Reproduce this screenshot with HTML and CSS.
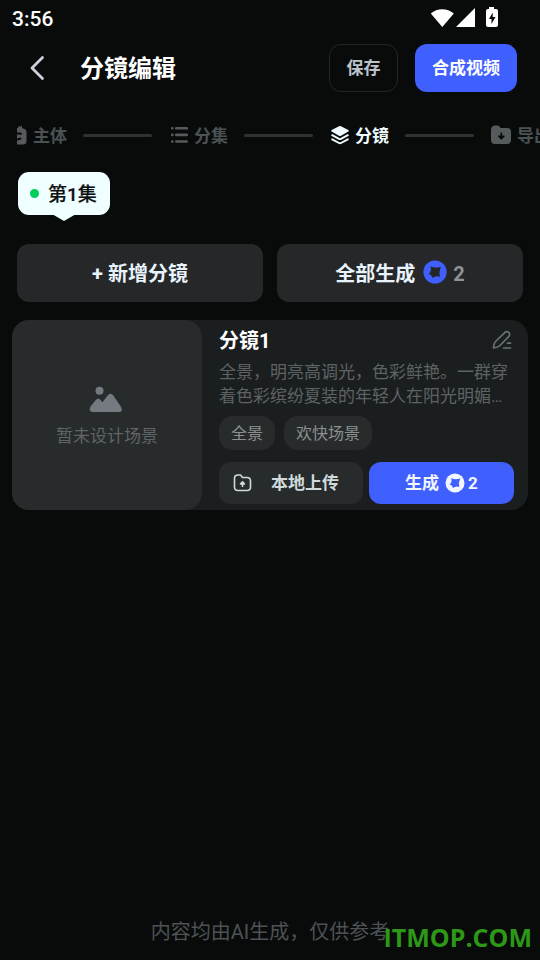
FILE: index.html
```html
<!DOCTYPE html>
<html lang="zh-CN">
<head>
<meta charset="utf-8">
<title>分镜编辑</title>
<link rel="stylesheet" href="styles.css">
</head>
<body>
<div class="statusbar">
  <span class="clock">3:56</span>
  <svg class="status-icons" width="70" height="22" viewBox="0 0 70 22" fill="#fff">
    <path d="M.8 6.500C7 .8 17.500.8 23.800 6.500L12.300 20Z"/>
    <path d="M26 20L45 1V20Z"/>
    <path d="M59 0h5v2h2q2 0 2 2v14q0 2-2 2h-8q-2 0-2-2V4q0-2 2-2h1z"/>
    <path d="M62.700 5.500L59 12h2.500v5l4-7h-2.800z" fill="#090b0a"/>
  </svg>
</div>
<header class="header">
  <svg class="back" width="18" height="28" viewBox="0 0 18 28" fill="none" stroke="#d0d0dc" stroke-width="2.800" stroke-linecap="round" stroke-linejoin="round"><path d="M14.500 3.500L4 14L14.500 24.500"/></svg>
  <h1 class="title">分镜编辑</h1>
  <button class="save"><span>保存</span></button>
  <button class="compose"><span>合成视频</span></button>
</header>
<nav class="steps">
  <div class="track">
    <div class="step">
      <svg width="18" height="20" viewBox="0 0 18 20"><path fill="#555a5d" d="M3 3h6l1-2.500L11 2l2-1.500V3q4.500 1 4.500 4v9q0 3.500-3.500 3.500H4q-3 0-3-3.500V6q0-3 2-3z"/><path d="M6 8.500h4.500q1.500 0 2 1M6 14q4 1 6-1" fill="none" stroke="#090b0a" stroke-width="1.800"/></svg>
      <span>主体</span>
    </div>
    <i class="line"></i>
    <div class="step">
      <svg width="18" height="18" viewBox="0 0 18 18" fill="#555a5d"><rect x="1" y="1" width="2.600" height="2.600" rx="1"/><rect x="1" y="7.600" width="2.600" height="2.600" rx="1"/><rect x="1" y="14.200" width="2.600" height="2.600" rx="1"/><rect x="5" y="1" width="13" height="2.600" rx="1.200"/><rect x="5" y="7.600" width="13" height="2.600" rx="1.200"/><rect x="5" y="14.200" width="13" height="2.600" rx="1.200"/></svg>
      <span>分集</span>
    </div>
    <i class="line"></i>
    <div class="step active">
      <svg width="18" height="20" viewBox="0 0 18 20"><path fill="#eefcff" d="M8 1.300q1-.5 2 0l7.300 3.700q1.200.8 0 1.600l-7.300 4.200q-1 .5-2 0L.7 6.600q-1.200-.8 0-1.600z"/><path fill="none" stroke="#eefcff" stroke-width="1.900" stroke-linejoin="round" stroke-linecap="round" d="M1.200 10.200l6.800 3.700q1 .5 2 0l6.800-3.700M1.200 14.300l6.800 3.700q1 .5 2 0l6.800-3.700"/></svg>
      <span>分镜</span>
    </div>
    <i class="line"></i>
    <div class="step export">
      <svg width="20" height="20" viewBox="0 0 20 20"><path fill="#555a5d" d="M0 5q0-4.500 4.500-4.500h2q1.300 0 2 1L9.500 3H16q4 0 4 4v8q0 4-4 4H4q-4 0-4-4z"/><path d="M10.300 7.500v6M7.800 11.200l2.500 2.600 2.500-2.600z" fill="#090b0a" stroke="#090b0a" stroke-width="1.600" stroke-linejoin="round"/></svg>
      <span>导出</span>
    </div>
  </div>
</nav>
<div class="episode"><i class="dot"></i><span>第1集</span></div>
<div class="actions">
  <button class="action"><span>+ 新增分镜</span></button>
  <button class="action"><span>全部生成</span><svg class="coin" width="24" height="24" viewBox="0 0 24 24"><circle cx="12" cy="12" r="11.600" fill="#405fff"/><path fill="#252628" d="M7.600 6.200Q11.800 8.700 18 6.700Q15.700 11.500 17 16.700Q12.800 15.200 9.400 18Q9.200 15 5.700 13.900Q8.800 11.200 7.600 6.200Z"/></svg><span class="cost">2</span></button>
</div>
<article class="card">
  <div class="scene">
    <svg width="34" height="27" viewBox="0 0 34 27" fill="#757a80"><circle cx="10.500" cy="4.800" r="4"/><path d="M1.500 20.500l5.300-6.500q2.400-3 4.800 0l1.800 2.200 5.200-6.800q3-3.300 5.700 0l7.800 11.500q2.200 5.100-2.100 5.100H4q-5 0-2.500-5.500z"/></svg>
    <span>暂未设计场景</span>
  </div>
  <div class="detail">
    <div class="card-head">
      <h2>分镜1</h2>
      <svg width="20" height="20" viewBox="0 0 20 20" fill="none" stroke="#6b7073" stroke-width="1.700" stroke-linecap="round" stroke-linejoin="round"><path d="M1.500 18q0-4.500 2-6.500L13 2.300q2-1.500 3.700 0t.2 4L8 15.500q-2 2-6.500 2.500zM11.500 18h7M15.500 13.200h3"/></svg>
    </div>
    <p class="desc">全景，明亮高调光，色彩鲜艳。一群穿<br>着色彩缤纷夏装的年轻人在阳光明媚…</p>
    <div class="tags"><span>全景</span><span>欢快场景</span></div>
    <div class="card-actions">
      <button class="upload"><svg width="20" height="18" viewBox="0 0 20 18" fill="none" stroke="#d0dadd" stroke-width="1.600" stroke-linejoin="round"><path d="M1.500 4.500q0-3.500 3.500-3.500h2.500l2 2.500H14q3.500 0 3.500 3.500v6q0 3.500-3.500 3.500H5q-3.500 0-3.500-3.500z"/><path fill="#d0dadd" d="M9.500 13V8M7.500 10l2-2.200 2 2.200z"/></svg><span>本地上传</span></button>
      <button class="generate"><span>生成</span><svg width="20" height="20" viewBox="0 0 20 20"><circle cx="10" cy="10" r="9.500" fill="#f1f5ff"/><path fill="#405fff" d="M6.300 5Q10 7.200 15.200 5.400Q13.200 9.500 14.300 13.900Q10.800 12.700 7.900 15Q7.700 12.500 4.700 11.600Q7.300 9.200 6.300 5Z"/></svg><span class="count">2</span></button>
    </div>
  </div>
</article>
<footer class="footer">内容均由AI生成，仅供参考</footer>
<div class="watermark">ITMOP.COM</div>
</body>
</html>
```
FILE: styles.css
```css
* { box-sizing: border-box; }
body {
  margin: 0;
  width: 540px;
  height: 960px;
  display: flex;
  flex-direction: column;
  position: relative;
  overflow: hidden;
  background: #090b0a;
  color: #fff;
  font-family: Roboto, "Noto Sans CJK SC", sans-serif;
}
button {
  border: 0;
  padding: 0 0 3px;
  font: inherit;
  color: inherit;
  display: flex;
  align-items: center;
  justify-content: center;
}
h1, h2, p { margin: 0; }
svg { display: block; flex: none; }
.statusbar {
  height: 36px;
  padding: 0 40px 0 12px;
  display: flex;
  align-items: center;
  justify-content: space-between;
}
.clock { font-size: 21px; font-weight: 500; line-height: 38px; padding-top: 2px; }
.header {
  height: 64px;
  padding: 0 23px 0 28px;
  display: flex;
  align-items: center;
}
.title { margin-left: 34px; padding-top: 2px; font-size: 24px; line-height: 36px; font-weight: 700; }
.save, .compose { height: 48px; border-radius: 12px; font-size: 17px; font-weight: 700; }
.save { width: 69px; margin-left: auto; background: transparent; border: 1px solid #242627; color: #b9c3c9; }
.compose { width: 102px; margin-left: 17px; background: #405fff; }
.steps { height: 36px; margin: 17px 0 0 17px; overflow: hidden; }
.track { display: flex; align-items: center; height: 36px; width: max-content; margin-left: -8px; }
.step { display: flex; align-items: center; gap: 6px; color: #4c5254; font-size: 17px; font-weight: 700; line-height: 24px; }
.step span { padding-top: 2px; }
.step.active { color: #eefcff; }
.step.export { margin-left: -1px; }
.line { width: 69px; height: 3px; margin: 0 18px 0 16px; border-radius: 2px; background: #303232; }
.episode {
  position: relative;
  width: 92px;
  height: 43px;
  margin: 19px 0 0 18px;
  padding-left: 12px;
  display: flex;
  align-items: center;
  gap: 9px;
  border-radius: 11px;
  background: #efffff;
  color: #0d1112;
  font-size: 19px;
  font-weight: 500;
}
.episode span { padding-bottom: 2px; -webkit-text-stroke: .2px #0d1112; }
.episode::after {
  content: "";
  position: absolute;
  left: 34px;
  top: 42px;
  width: 24px;
  height: 7px;
  background: #efffff;
  clip-path: polygon(0 0, 100% 0, 50% 100%);
}
.dot { width: 9px; height: 9px; border-radius: 50%; background: #00ce58; }
.actions { display: flex; gap: 14px; margin: 29px 17px 0; }
.action { flex: 1; height: 58px; border-radius: 12px; background: #262729; color: #e8f3fb; font-size: 20px; font-weight: 700; }
.action { padding-bottom: 1px; }
.coin { margin: -1px 6px 0 8px; }
.cost { padding-top: 2px; color: #8e9499; }
.card { display: flex; height: 190px; margin: 18px 12px 0; border-radius: 17px; background: #1b1e1f; }
.scene {
  width: 190px;
  border-radius: 17px;
  background: #272b2c;
  display: flex;
  flex-direction: column;
  align-items: center;
  padding-top: 66px;
  color: #5f6466;
  font-size: 17px;
  line-height: 24px;
}
.scene span { margin-top: 11px; }
.scene svg { margin-right: 2px; }
.detail { width: 295px; margin-left: 17px; }
.card-head { display: flex; justify-content: space-between; align-items: center; height: 40px; padding-right: 2px; }
.card-head h2 { padding-top: 2px; font-size: 20px; line-height: 30px; font-weight: 700; }
.desc { color: #5d6364; font-size: 17px; line-height: 24px; white-space: nowrap; }
.tags { display: flex; gap: 9px; margin-top: 8px; }
.tags span { height: 34px; padding: 0 12px; border-radius: 14px; background: #282b2c; color: #8c9092; font-size: 16px; line-height: 36px; }
.card-actions { display: flex; gap: 6px; margin-top: 12px; }
.card-actions button { height: 42px; padding-bottom: 0; border-radius: 12px; font-size: 17px; font-weight: 700; }
.card-actions .upload { width: 144px; justify-content: flex-start; padding-left: 14px; gap: 18px; background: #272b2c; color: #d0dadd; }
.upload span, .generate span:first-child { padding-bottom: 3px; }
.card-actions .generate { width: 145px; gap: 3px; background: #405fff; color: #f1f5ff; }
.generate svg { margin-left: 3px; }
.footer { margin-top: auto; height: 57px; line-height: 58px; text-align: center; color: #4c5256; font-size: 20px; }
.watermark {
  position: absolute;
  right: 8px;
  bottom: 8px;
  color: #2d9718;
  font-family: "Open Sans", sans-serif;
  font-size: 25px;
  font-weight: 700;
  line-height: 30px;
}
```
